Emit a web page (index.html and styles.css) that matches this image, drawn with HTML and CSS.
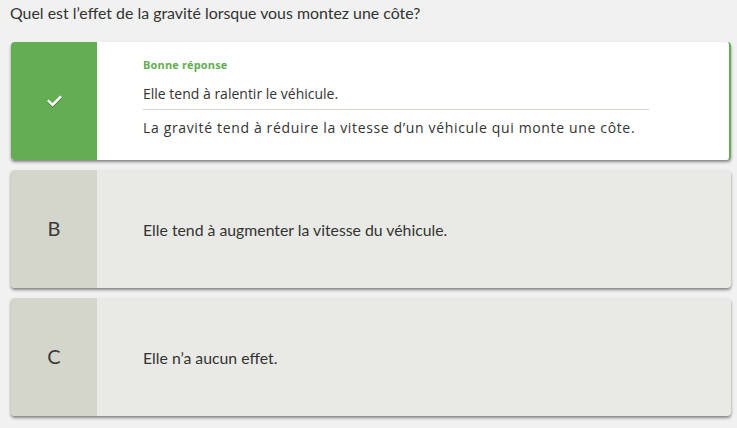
FILE: index.html
```html
<!DOCTYPE html>
<html lang="fr">
<head>
<meta charset="utf-8">
<link rel="stylesheet" href="styles.css">
</head>
<body>
<div class="quiz">
  <p class="question">Quel est l’effet de la gravité lorsque vous montez une côte?</p>
  <div class="answers">
    <div class="card correct">
      <div class="marker">
        <svg class="check" width="15" height="12" viewBox="0 0 15 12"><path d="M1.8 6.3 L5.5 10 L13.2 2.2" fill="none" stroke="#fff" stroke-width="2.5" stroke-linecap="square"/></svg>
      </div>
      <div class="body">
        <div class="label">Bonne réponse</div>
        <div class="answer">Elle tend à ralentir le véhicule.</div>
        <div class="explain">La gravité tend à réduire la vitesse d’un véhicule qui monte une côte.</div>
      </div>
    </div>
    <div class="card">
      <div class="marker letter">B</div>
      <div class="body plain">Elle tend à augmenter la vitesse du véhicule.</div>
    </div>
    <div class="card">
      <div class="marker letter">C</div>
      <div class="body plain">Elle n’a aucun effet.</div>
    </div>
  </div>
</div>
</body>
</html>
```

FILE: styles.css
```css
html, body {
  margin: 0;
  padding: 0;
  background: #f1f1f1;
}
body {
  font-family: Lato, "Open Sans", sans-serif;
  color: #333;
}
.quiz {
  padding: 0 6px 12px 11px;
}
.question {
  margin: 0 0 0 -1px;
  padding-top: 3px;
  font-size: 15.9px;
  line-height: 19px;
  color: #333;
}
.answers {
  display: flex;
  flex-direction: column;
  gap: 10px;
  margin-top: 20px;
}
.card {
  display: flex;
  height: 118px;
  border-radius: 4px;
  overflow: hidden;
  background: #e9eae5;
  box-shadow: 0 2px 3px rgba(0,0,0,0.45);
}
.card.correct {
  background: #fff;
  border-right: 2px solid #64ad52;
}
.marker {
  width: 86px;
  flex: none;
  display: flex;
  align-items: center;
  justify-content: center;
  background: #d4d6cc;
}
.correct .marker {
  background: #64ad52;
}
.check {
  filter: drop-shadow(0 1px 0 rgba(0,0,0,0.35));
}
.letter {
  font-size: 20px;
  color: #3a3a3a;
  padding-bottom: 2px;
  box-sizing: border-box;
}
.body {
  flex: 1;
  padding-left: 46px;
}
.correct .body {
  font-family: "Open Sans", sans-serif;
  padding-top: 16px;
}
.label {
  font-size: 11px;
  font-weight: 700;
  letter-spacing: 0.15px;
  color: #64ad52;
  line-height: 14px;
}
.answer {
  width: 506px;
  font-size: 14px;
  line-height: 20px;
  padding: 12px 0 5px;
  border-bottom: 1px solid #d4d6cc;
}
.explain {
  font-size: 14px;
  letter-spacing: 0.65px;
  line-height: 20px;
  padding-top: 8px;
}
.plain {
  display: flex;
  align-items: center;
  font-size: 15.8px;
  color: #333;
}
```
